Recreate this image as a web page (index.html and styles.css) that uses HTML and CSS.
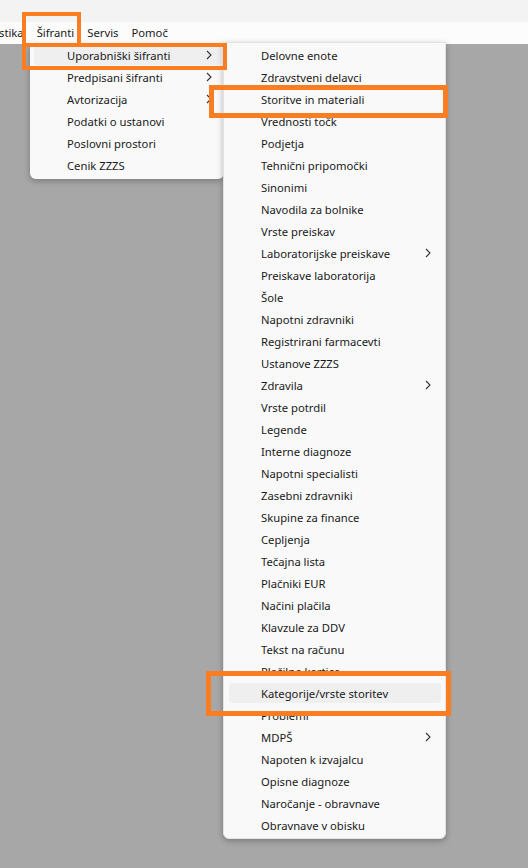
FILE: index.html
```html
<!DOCTYPE html>
<html lang="sl">
<head>
<meta charset="utf-8">
<title>Šifranti</title>
<link rel="stylesheet" href="styles.css">
</head>
<body>
<div class="top"></div>
<nav class="menubar">
  <span class="mb-item mb-cut">stika</span>
  <span class="mb-item">Šifranti</span>
  <span class="mb-item">Servis</span>
  <span class="mb-item">Pomoč</span>
</nav>

<div class="menu menu1">
  <div class="item hl"><span>Uporabniški šifranti</span><svg class="chev" viewBox="0 0 6 10"><polyline points="1,1 5,5 1,9"/></svg></div>
  <div class="item"><span>Predpisani šifranti</span><svg class="chev" viewBox="0 0 6 10"><polyline points="1,1 5,5 1,9"/></svg></div>
  <div class="item"><span>Avtorizacija</span><svg class="chev" viewBox="0 0 6 10"><polyline points="1,1 5,5 1,9"/></svg></div>
  <div class="item"><span>Podatki o ustanovi</span></div>
  <div class="item"><span>Poslovni prostori</span></div>
  <div class="item"><span>Cenik ZZZS</span></div>
</div>

<div class="menu menu2">
  <div class="item"><span>Delovne enote</span></div>
  <div class="item"><span>Zdravstveni delavci</span></div>
  <div class="item"><span>Storitve in materiali</span></div>
  <div class="item"><span>Vrednosti točk</span></div>
  <div class="item"><span>Podjetja</span></div>
  <div class="item"><span>Tehnični pripomočki</span></div>
  <div class="item"><span>Sinonimi</span></div>
  <div class="item"><span>Navodila za bolnike</span></div>
  <div class="item"><span>Vrste preiskav</span></div>
  <div class="item"><span>Laboratorijske preiskave</span><svg class="chev" viewBox="0 0 6 10"><polyline points="1,1 5,5 1,9"/></svg></div>
  <div class="item"><span>Preiskave laboratorija</span></div>
  <div class="item"><span>Šole</span></div>
  <div class="item"><span>Napotni zdravniki</span></div>
  <div class="item"><span>Registrirani farmacevti</span></div>
  <div class="item"><span>Ustanove ZZZS</span></div>
  <div class="item"><span>Zdravila</span><svg class="chev" viewBox="0 0 6 10"><polyline points="1,1 5,5 1,9"/></svg></div>
  <div class="item"><span>Vrste potrdil</span></div>
  <div class="item"><span>Legende</span></div>
  <div class="item"><span>Interne diagnoze</span></div>
  <div class="item"><span>Napotni specialisti</span></div>
  <div class="item"><span>Zasebni zdravniki</span></div>
  <div class="item"><span>Skupine za finance</span></div>
  <div class="item"><span>Cepljenja</span></div>
  <div class="item"><span>Tečajna lista</span></div>
  <div class="item"><span>Plačniki EUR</span></div>
  <div class="item"><span>Načini plačila</span></div>
  <div class="item"><span>Klavzule za DDV</span></div>
  <div class="item"><span>Tekst na računu</span></div>
  <div class="item"><span>Plačilne kartice</span></div>
  <div class="item hl"><span>Kategorije/vrste storitev</span></div>
  <div class="item"><span>Problemi</span></div>
  <div class="item"><span>MDPŠ</span><svg class="chev" viewBox="0 0 6 10"><polyline points="1,1 5,5 1,9"/></svg></div>
  <div class="item"><span>Napoten k izvajalcu</span></div>
  <div class="item"><span>Opisne diagnoze</span></div>
  <div class="item"><span>Naročanje - obravnave</span></div>
  <div class="item"><span>Obravnave v obisku</span></div>
</div>

<div class="mark mark-a"></div>
<div class="mark mark-b"></div>
<div class="mark mark-c"></div>
<div class="mark mark-d"></div>
</body>
</html>
```

FILE: styles.css
```css
html, body {
  margin: 0;
  padding: 0;
}
body {
  width: 528px;
  height: 868px;
  overflow: hidden;
  background: #a7a7a7;
  font-family: "Noto Sans", "Open Sans", sans-serif;
  font-size: 11.25px;
  color: #1a1a1a;
  position: relative;
}
.top {
  height: 22px;
  background: #f3f3f3;
}
.menubar {
  height: 22px;
  background: #fcfcfc;
  display: flex;
  align-items: center;
  gap: 13px;
  margin-left: -1px;
}
.mb-item {
  line-height: 22px;
}
.menu {
  position: absolute;
  background: #f9f9f9;
  box-sizing: border-box;
  box-shadow: 0 2px 6px rgba(0, 0, 0, 0.28);
}
.menu1 {
  left: 30px;
  top: 44px;
  width: 194px;
  padding: 0 0 3px;
  border-radius: 0 0 6px 6px;
}
.menu2 {
  left: 223px;
  top: 42px;
  width: 223px;
  padding: 1px 0 2px;
  border: 1px solid #e3e3e3;
  border-radius: 0 0 6px 6px;
}
.item {
  height: 20px;
  border-top: 1px solid transparent;
  border-bottom: 1px solid transparent;
  background-clip: padding-box;
  display: flex;
  align-items: center;
  border-radius: 4px;
  white-space: nowrap;
}
.menu1 .item {
  margin: 0 3px 0 4px;
  padding: 0 9px 0 33px;
}
.menu2 .item {
  margin: 0 4px 0 5px;
  padding: 0 10px 0 32px;
}
.item.hl {
  background-color: #efefef;
}
.chev {
  margin-left: auto;
  width: 6px;
  height: 10px;
  fill: none;
  stroke: #333;
  stroke-width: 1.1;
}
.mark {
  position: absolute;
  box-sizing: border-box;
  border: 4px solid #fa7d22;
}
.mark-a {
  left: 22px;
  top: 12px;
  width: 59px;
  height: 35px;
}
.mark-b {
  left: 22px;
  top: 43px;
  width: 205px;
  height: 27px;
}
.mark-c {
  left: 209px;
  top: 85px;
  width: 239px;
  height: 33px;
  border-width: 5px;
}
.mark-d {
  left: 206px;
  top: 671px;
  width: 245px;
  height: 45px;
  border-width: 5px;
}
```
